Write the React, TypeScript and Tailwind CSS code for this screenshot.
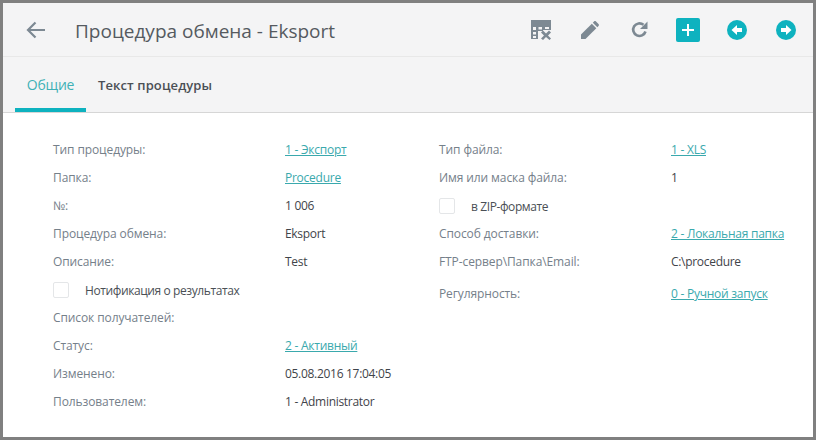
import * as React from "react";

type Row = { label: string; value?: string; link?: boolean; check?: boolean; h?: string };

const LEFT: Row[] = [
  { label: "Тип процедуры:", value: "1 - Экспорт", link: true },
  { label: "Папка:", value: "Procedure", link: true },
  { label: "№:", value: "1 006" },
  { label: "Процедура обмена:", value: "Eksport" },
  { label: "Описание:", value: "Test" },
  { label: "Нотификация о результатах", check: true },
  { label: "Список получателей:" },
  { label: "Статус:", value: "2 - Активный", link: true },
  { label: "Изменено:", value: "05.08.2016 17:04:05" },
  { label: "Пользователем:", value: "1 - Administrator" },
];

const RIGHT: Row[] = [
  { label: "Тип файла:", value: "1 - XLS", link: true },
  { label: "Имя или маска файла:", value: "1" },
  { label: "в ZIP-формате", check: true },
  { label: "Способ доставки:", value: "2 - Локальная папка", link: true },
  { label: "FTP-сервер\\Папка\\Email:", value: "C:\\procedure" },
  { label: "Регулярность:", value: "0 - Ручной запуск", link: true, h: "h-[36px]" },
];

function FieldRow({ row }: { row: Row }) {
  if (row.check) {
    return (
      <div className="flex h-[28px] items-center">
        <span className="h-[16px] w-[16px] rounded-[2px] border border-[#e4e6e8] bg-white" />
        <span className="ml-[16px] pt-[2px] tracking-[-0.4px] text-[#4a4f55]">{row.label}</span>
      </div>
    );
  }
  return (
    <div className={`flex items-center ${row.h ?? "h-[28px]"}`}>
      <span className="w-[232px] font-medium tracking-[-0.1px] text-[#75808a]">{row.label}</span>
      {row.link ? (
        <a className="tracking-[-0.25px] text-[#3aa9ad] underline">{row.value}</a>
      ) : (
        <span className="tracking-[-0.3px] text-[#3f444a]">{row.value}</span>
      )}
    </div>
  );
}

function TableX() {
  return (
    <svg width="20" height="20" viewBox="0 0 20 20" fill="#7d8993">
      <path d="M0 0h20v10h-8v1H7v8H0z" />
      <path d="M2 7h3v3H2zM2 12h3v2.500H2zM2 16h3v2H2zM7.500 7H11v2.500H7.500zM14 7h4v2h-4z" fill="#f4f4f5" />
      <path d="M12 10.500l3 3 3-3 2 2-3 3 3 3-1.500 1.500-3.500-3-3 3-2-1.500 3-3-3-3z" />
    </svg>
  );
}

function Pencil() {
  return (
    <svg width="18" height="18" viewBox="0 0 18 18" fill="#7d8993">
      <path d="M0 18v-4.500L10.800 2.700l4.500 4.500L4.500 18z" />
      <path d="M11.800 1.700L13 .5c.6-.6 1.400-.6 2 0l2.500 2.500c.6.600.6 1.400 0 2l-1.200 1.200z" />
    </svg>
  );
}

function Reload() {
  return (
    <svg width="17" height="17" viewBox="0 0 17 17" fill="none">
      <path d="M14.500 10.500A6.300 6.300 0 1 1 12.500 3.800" stroke="#7d8993" strokeWidth="2.600" />
      <path d="M16.500 0.500v7.500H9z" fill="#7d8993" />
    </svg>
  );
}

function RoundArrow({ flip }: { flip?: boolean }) {
  return (
    <svg width="20" height="20" viewBox="0 0 20 20" className={flip ? "-scale-x-100" : ""}>
      <circle cx="10" cy="10" r="10" fill="#0eb2bf" />
      <path d="M4.500 10L10 5v3h5v4h-5v3z" fill="#fff" />
    </svg>
  );
}

export default function App() {
  return (
    <div
      className="flex h-[440px] w-[816px] flex-col border-[3px] border-[#808080] bg-white text-[12px]"
      style={{ fontFamily: '"Open Sans", "Noto Sans", sans-serif' }}
    >
      <div className="flex h-[54px] items-center border-b border-[#e8e8e8] bg-[#f4f4f5] pl-[22px] pr-[17px]">
        <svg width="22" height="20" viewBox="0 0 22 20" fill="none" stroke="#7d8993" strokeWidth="2.200">
          <path d="M20 10H3M10.500 2.500L3 10l7.500 7.500" />
        </svg>
        <h1 className="ml-[28px] pt-[3px] text-[19px] leading-none text-[#555a60]">Процедура обмена - Eksport</h1>
        <div className="ml-auto flex items-center">
          <TableX />
          <span className="ml-[30px] flex"><Pencil /></span>
          <span className="ml-[32px] flex"><Reload /></span>
          <span className="ml-[28px] flex h-[24px] w-[24px] items-center justify-center rounded-[2px] bg-[#0eb2bf]">
            <svg width="12" height="12" viewBox="0 0 12 12" fill="#fff">
              <path d="M5 0h2v5h5v2H7v5H5V7H0V5h5z" />
            </svg>
          </span>
          <span className="ml-[27px] flex"><RoundArrow /></span>
          <span className="ml-[29px] flex"><RoundArrow flip /></span>
        </div>
      </div>

      <div className="flex h-[56px] items-end border-b border-[#d6d6d6] bg-[#f4f4f5] pl-[12px]">
        <div className="flex h-[56px] w-[71px] items-center justify-center border-b-[4px] border-[#0eb2bf] pt-[5px] text-[14px] tracking-[-0.2px] text-[#3fb1b6]">
          Общие
        </div>
        <div className="ml-[12px] flex h-[56px] items-center pt-[3px] text-[13px] font-semibold tracking-[0.1px] text-[#4a4f55]">
          Текст процедуры
        </div>
      </div>

      <div className="flex pl-[50px] pt-[23px]">
        <div className="w-[386px]">
          {LEFT.map((r) => (
            <FieldRow key={r.label} row={r} />
          ))}
        </div>
        <div>
          {RIGHT.map((r) => (
            <FieldRow key={r.label} row={r} />
          ))}
        </div>
      </div>
    </div>
  );
}
